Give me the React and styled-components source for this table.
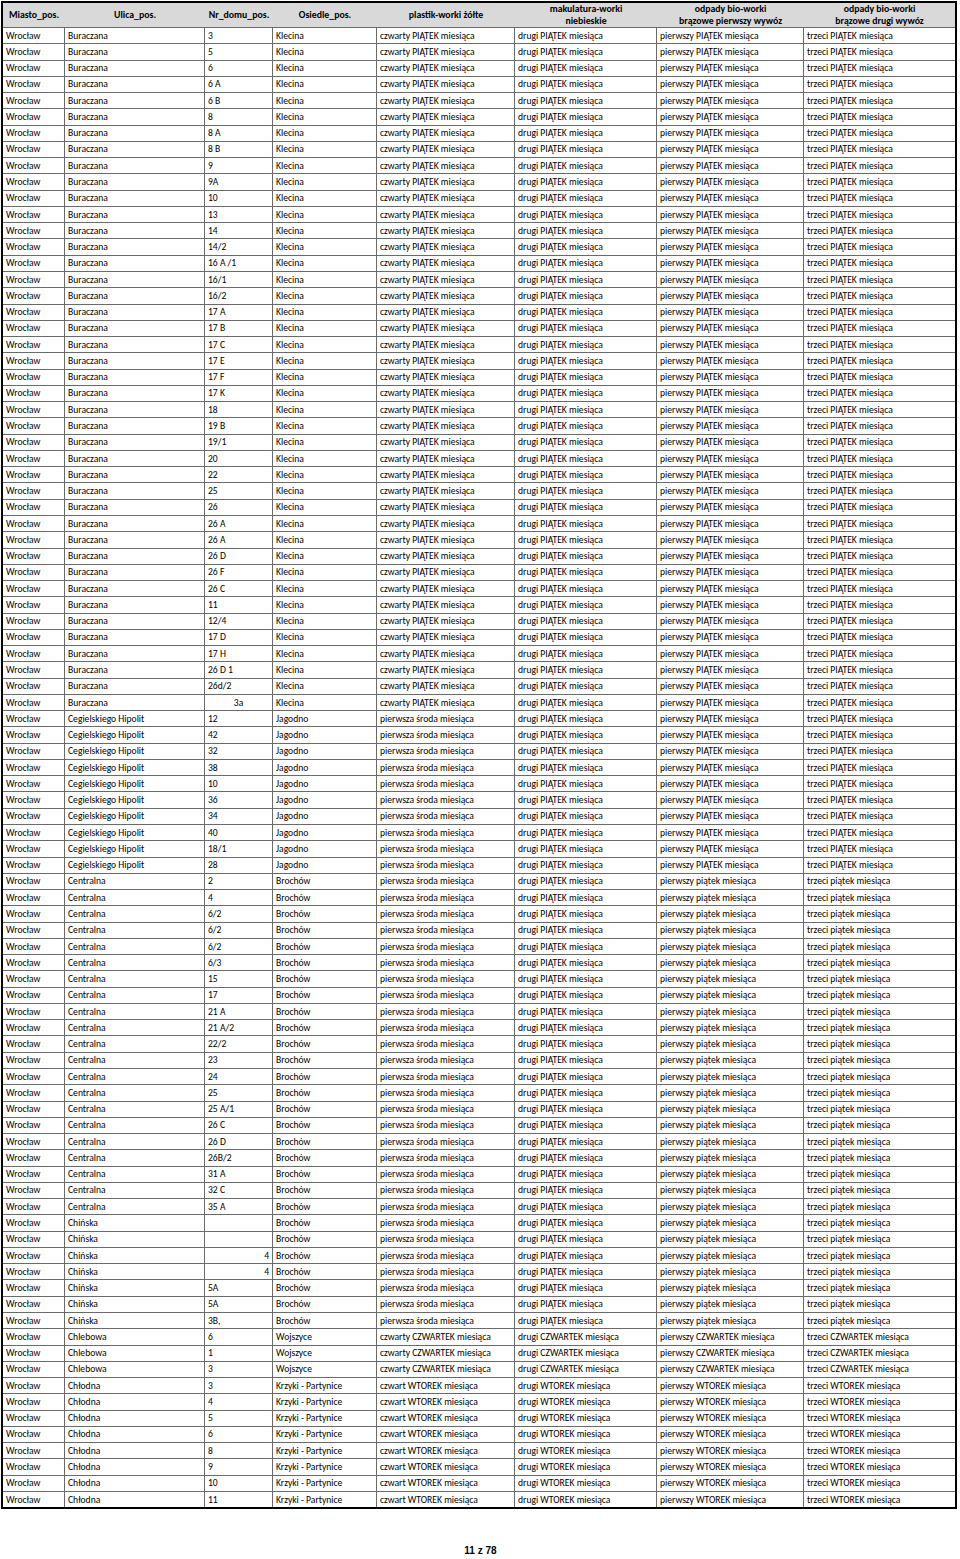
import React from "react";
import styled, { createGlobalStyle } from "styled-components";

const PIATEK = ["czwarty PIĄTEK miesiąca", "drugi PIĄTEK miesiąca", "pierwszy PIĄTEK miesiąca", "trzeci PIĄTEK miesiąca"];
const SRODA = ["pierwsza środa miesiąca", "drugi PIĄTEK miesiąca", "pierwszy PIĄTEK miesiąca", "trzeci PIĄTEK miesiąca"];
const SRODA_MALE = ["pierwsza środa miesiąca", "drugi PIĄTEK miesiąca", "pierwszy piątek miesiąca", "trzeci piątek miesiąca"];
const CZWARTEK = ["czwarty CZWARTEK miesiąca", "drugi CZWARTEK miesiąca", "pierwszy CZWARTEK miesiąca", "trzeci CZWARTEK miesiąca"];
const WTOREK = ["czwart WTOREK miesiąca", "drugi WTOREK miesiąca", "pierwszy WTOREK miesiąca", "trzeci WTOREK miesiąca"];

// numer domu: string albo [tekst, wyrównanie]
const grupy = [
  {
    ulica: "Buraczana",
    osiedle: "Klecina",
    terminy: PIATEK,
    numery: [
      "3", "5", "6", "6 A", "6 B", "8", "8 A", "8 B", "9", "9A", "10", "13", "14", "14/2", "16 A /1",
      "16/1", "16/2", "17 A", "17 B", "17 C", "17 E", "17 F", "17 K", "18", "19 B", "19/1", "20", "22",
      "25", "26", "26 A", "26 A", "26 D", "26 F", "26 C", "11", "12/4", "17 D", "17 H", "26 D 1", "26d/2",
      ["3a", "center"],
    ],
  },
  {
    ulica: "Cegielskiego Hipolit",
    osiedle: "Jagodno",
    terminy: SRODA,
    numery: ["12", "42", "32", "38", "10", "36", "34", "40", "18/1", "28"],
  },
  {
    ulica: "Centralna",
    osiedle: "Brochów",
    terminy: SRODA_MALE,
    numery: [
      "2", "4", "6/2", "6/2", "6/2", "6/3", "15", "17", "21 A", "21 A/2", "22/2", "23", "24", "25",
      "25 A/1", "26 C", "26 D", "26B/2", "31 A", "32 C", "35 A",
    ],
  },
  {
    ulica: "Chińska",
    osiedle: "Brochów",
    terminy: SRODA_MALE,
    numery: ["", "", ["4", "right"], ["4", "right"], "5A", "5A", "3B,"],
  },
  {
    ulica: "Chlebowa",
    osiedle: "Wojszyce",
    terminy: CZWARTEK,
    numery: ["6", "1", "3"],
  },
  {
    ulica: "Chłodna",
    osiedle: "Krzyki - Partynice",
    terminy: WTOREK,
    numery: ["3", "4", "5", "6", "8", "9", "10", "11"],
  },
];

const wiersze = grupy.flatMap((g) =>
  g.numery.map((n) => {
    const [nr, align] = Array.isArray(n) ? n : [n, "left"];
    return { ulica: g.ulica, osiedle: g.osiedle, terminy: g.terminy, nr, align };
  })
);

export default function App() {
  return (
    <>
      <GlobalStyle />
      <Strona>
        <Tabela>
          <Naglowek>
            <Nag>Miasto_pos.</Nag>
            <Nag>Ulica_pos.</Nag>
            <Nag>Nr_domu_pos.</Nag>
            <Nag>Osiedle_pos.</Nag>
            <Nag>plastik-worki żółte</Nag>
            <Nag>makulatura-worki<br />niebieskie</Nag>
            <Nag>odpady bio-worki<br />brązowe pierwszy wywóz</Nag>
            <Nag>odpady bio-worki<br />brązowe drugi wywóz</Nag>
          </Naglowek>
          {wiersze.map((w, i) => (
            <Wiersz key={i}>
              <Komorka>Wrocław</Komorka>
              <Komorka>{w.ulica}</Komorka>
              <Komorka $align={w.align}>{w.nr}</Komorka>
              <Komorka>{w.osiedle}</Komorka>
              {w.terminy.map((t, j) => (
                <Komorka key={j}>{t}</Komorka>
              ))}
            </Wiersz>
          ))}
        </Tabela>
        <Stopka>11 z 78</Stopka>
      </Strona>
    </>
  );
}

/* styles */
const GlobalStyle = createGlobalStyle`
  html, body {
    margin: 0;
    padding: 0;
    background: #fff;
  }
`;

const KOLUMNY = "62px 140px 68px 104px 138px 142px 147px 151px";

const Strona = styled.div`
  width: 960px;
  height: 1559px;
  padding: 1px 0 0 1px;
  box-sizing: border-box;
  font-family: "Carlito", Lato, "Liberation Sans", sans-serif;
  color: #000;
`;

const Tabela = styled.div`
  width: 956px;
  box-sizing: border-box;
  border: 2px solid #000;
`;

const Naglowek = styled.div`
  display: grid;
  grid-template-columns: ${KOLUMNY};
  height: 24px;
  background: #d9d9d9;
`;

const Nag = styled.div`
  display: flex;
  align-items: center;
  justify-content: center;
  text-align: center;
  font-weight: 700;
  font-size: 9.8px;
  line-height: 12px;
  white-space: nowrap;
`;

const Wiersz = styled.div`
  display: grid;
  grid-template-columns: ${KOLUMNY};
  height: 16.27px;
  box-sizing: border-box;
  border-top: 1px solid #6a6a6a;
`;

const Komorka = styled.div`
  display: flex;
  align-items: center;
  justify-content: ${({ $align }) =>
    $align === "center" ? "center" : $align === "right" ? "flex-end" : "flex-start"};
  padding: 0 3px;
  font-size: 9.6px;
  white-space: nowrap;
  overflow: hidden;
  border-right: 1px solid #6a6a6a;

  &:last-child {
    border-right: 0;
  }
`;

const Stopka = styled.div`
  margin-top: 36px;
  text-align: center;
  font-family: "Liberation Sans", Arial, sans-serif;
  font-weight: 700;
  font-size: 10px;
  color: #000;
`;
